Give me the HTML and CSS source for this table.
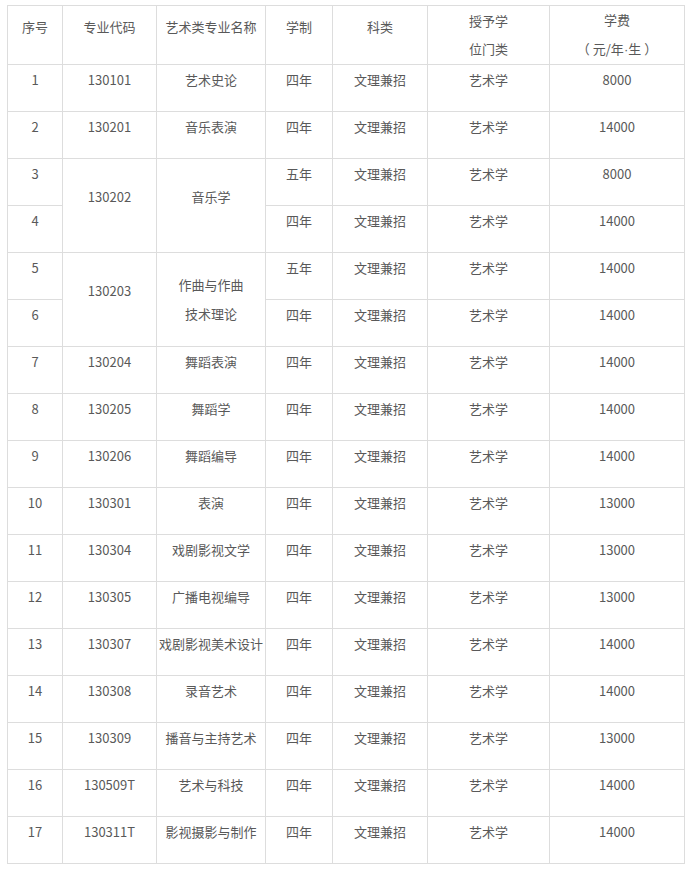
FILE: index.html
```html
<!DOCTYPE html>
<html lang="zh-CN">
<head>
<meta charset="utf-8">
<title>艺术类专业</title>
<link rel="stylesheet" href="styles.css">
</head>
<body>
<table class="tbl">
<colgroup>
<col class="c1"><col class="c2"><col class="c3"><col class="c4"><col class="c5"><col class="c6"><col class="c7">
</colgroup>
<tr class="head">
<td><span class="one">序号</span></td>
<td><span class="one">专业代码</span></td>
<td><span class="one">艺术类专业名称</span></td>
<td><span class="one">学制</span></td>
<td><span class="one">科类</span></td>
<td><span class="two">授予学<br>位门类</span></td>
<td><span class="two">学费<br>（<span class="gap">元/年<span class="dot">·</span>生</span>）</span></td>
</tr>
<tr><td><span class="one">1</span></td><td><span class="one">130101</span></td><td><span class="one">艺术史论</span></td><td><span class="one">四年</span></td><td><span class="one">文理兼招</span></td><td><span class="one">艺术学</span></td><td><span class="one">8000</span></td></tr>
<tr><td><span class="one">2</span></td><td><span class="one">130201</span></td><td><span class="one">音乐表演</span></td><td><span class="one">四年</span></td><td><span class="one">文理兼招</span></td><td><span class="one">艺术学</span></td><td><span class="one">14000</span></td></tr>
<tr><td><span class="one">3</span></td><td rowspan="2"><span class="one">130202</span></td><td rowspan="2"><span class="one">音乐学</span></td><td><span class="one">五年</span></td><td><span class="one">文理兼招</span></td><td><span class="one">艺术学</span></td><td><span class="one">8000</span></td></tr>
<tr><td><span class="one">4</span></td><td><span class="one">四年</span></td><td><span class="one">文理兼招</span></td><td><span class="one">艺术学</span></td><td><span class="one">14000</span></td></tr>
<tr><td><span class="one">5</span></td><td rowspan="2"><span class="one">130203</span></td><td rowspan="2"><span class="two">作曲与作曲<br>技术理论</span></td><td><span class="one">五年</span></td><td><span class="one">文理兼招</span></td><td><span class="one">艺术学</span></td><td><span class="one">14000</span></td></tr>
<tr><td><span class="one">6</span></td><td><span class="one">四年</span></td><td><span class="one">文理兼招</span></td><td><span class="one">艺术学</span></td><td><span class="one">14000</span></td></tr>
<tr><td><span class="one">7</span></td><td><span class="one">130204</span></td><td><span class="one">舞蹈表演</span></td><td><span class="one">四年</span></td><td><span class="one">文理兼招</span></td><td><span class="one">艺术学</span></td><td><span class="one">14000</span></td></tr>
<tr><td><span class="one">8</span></td><td><span class="one">130205</span></td><td><span class="one">舞蹈学</span></td><td><span class="one">四年</span></td><td><span class="one">文理兼招</span></td><td><span class="one">艺术学</span></td><td><span class="one">14000</span></td></tr>
<tr><td><span class="one">9</span></td><td><span class="one">130206</span></td><td><span class="one">舞蹈编导</span></td><td><span class="one">四年</span></td><td><span class="one">文理兼招</span></td><td><span class="one">艺术学</span></td><td><span class="one">14000</span></td></tr>
<tr><td><span class="one">10</span></td><td><span class="one">130301</span></td><td><span class="one">表演</span></td><td><span class="one">四年</span></td><td><span class="one">文理兼招</span></td><td><span class="one">艺术学</span></td><td><span class="one">13000</span></td></tr>
<tr><td><span class="one">11</span></td><td><span class="one">130304</span></td><td><span class="one">戏剧影视文学</span></td><td><span class="one">四年</span></td><td><span class="one">文理兼招</span></td><td><span class="one">艺术学</span></td><td><span class="one">13000</span></td></tr>
<tr><td><span class="one">12</span></td><td><span class="one">130305</span></td><td><span class="one">广播电视编导</span></td><td><span class="one">四年</span></td><td><span class="one">文理兼招</span></td><td><span class="one">艺术学</span></td><td><span class="one">13000</span></td></tr>
<tr><td><span class="one">13</span></td><td><span class="one">130307</span></td><td><span class="one">戏剧影视美术设计</span></td><td><span class="one">四年</span></td><td><span class="one">文理兼招</span></td><td><span class="one">艺术学</span></td><td><span class="one">14000</span></td></tr>
<tr><td><span class="one">14</span></td><td><span class="one">130308</span></td><td><span class="one">录音艺术</span></td><td><span class="one">四年</span></td><td><span class="one">文理兼招</span></td><td><span class="one">艺术学</span></td><td><span class="one">14000</span></td></tr>
<tr><td><span class="one">15</span></td><td><span class="one">130309</span></td><td><span class="one">播音与主持艺术</span></td><td><span class="one">四年</span></td><td><span class="one">文理兼招</span></td><td><span class="one">艺术学</span></td><td><span class="one">13000</span></td></tr>
<tr><td><span class="one">16</span></td><td><span class="one">130509T</span></td><td><span class="one">艺术与科技</span></td><td><span class="one">四年</span></td><td><span class="one">文理兼招</span></td><td><span class="one">艺术学</span></td><td><span class="one">14000</span></td></tr>
<tr><td><span class="one">17</span></td><td><span class="one">130311T</span></td><td><span class="one">影视摄影与制作</span></td><td><span class="one">四年</span></td><td><span class="one">文理兼招</span></td><td><span class="one">艺术学</span></td><td><span class="one">14000</span></td></tr>
</table>
</body>
</html>
```
FILE: styles.css
```css
html, body {
  margin: 0;
  padding: 0;
  background: #ffffff;
}
body {
  padding: 5px 0 0 7px;
  font-family: "Noto Sans CJK SC", "Noto Sans", sans-serif;
  font-size: 13px;
  color: #595959;
}
.tbl {
  border-collapse: collapse;
  table-layout: fixed;
  width: 677px;
}
.c1 { width: 55px; }
.c2 { width: 94px; }
.c3 { width: 109px; }
.c4 { width: 67px; }
.c5 { width: 95px; }
.c6 { width: 122px; }
.c7 { width: 135px; }
.tbl td {
  border: 1px solid #dddddd;
  text-align: center;
  vertical-align: middle;
  padding: 0;
  height: 46px;
  line-height: 28px;
  white-space: nowrap;
}
.tbl tr.head td {
  height: 58px;
}
.one {
  display: block;
  padding-bottom: 17px;
}
.two {
  display: block;
  line-height: 28.5px;
}
.gap {
  padding: 0 3px;
}
.dot {
  font-family: "Liberation Sans", sans-serif;
}
```
